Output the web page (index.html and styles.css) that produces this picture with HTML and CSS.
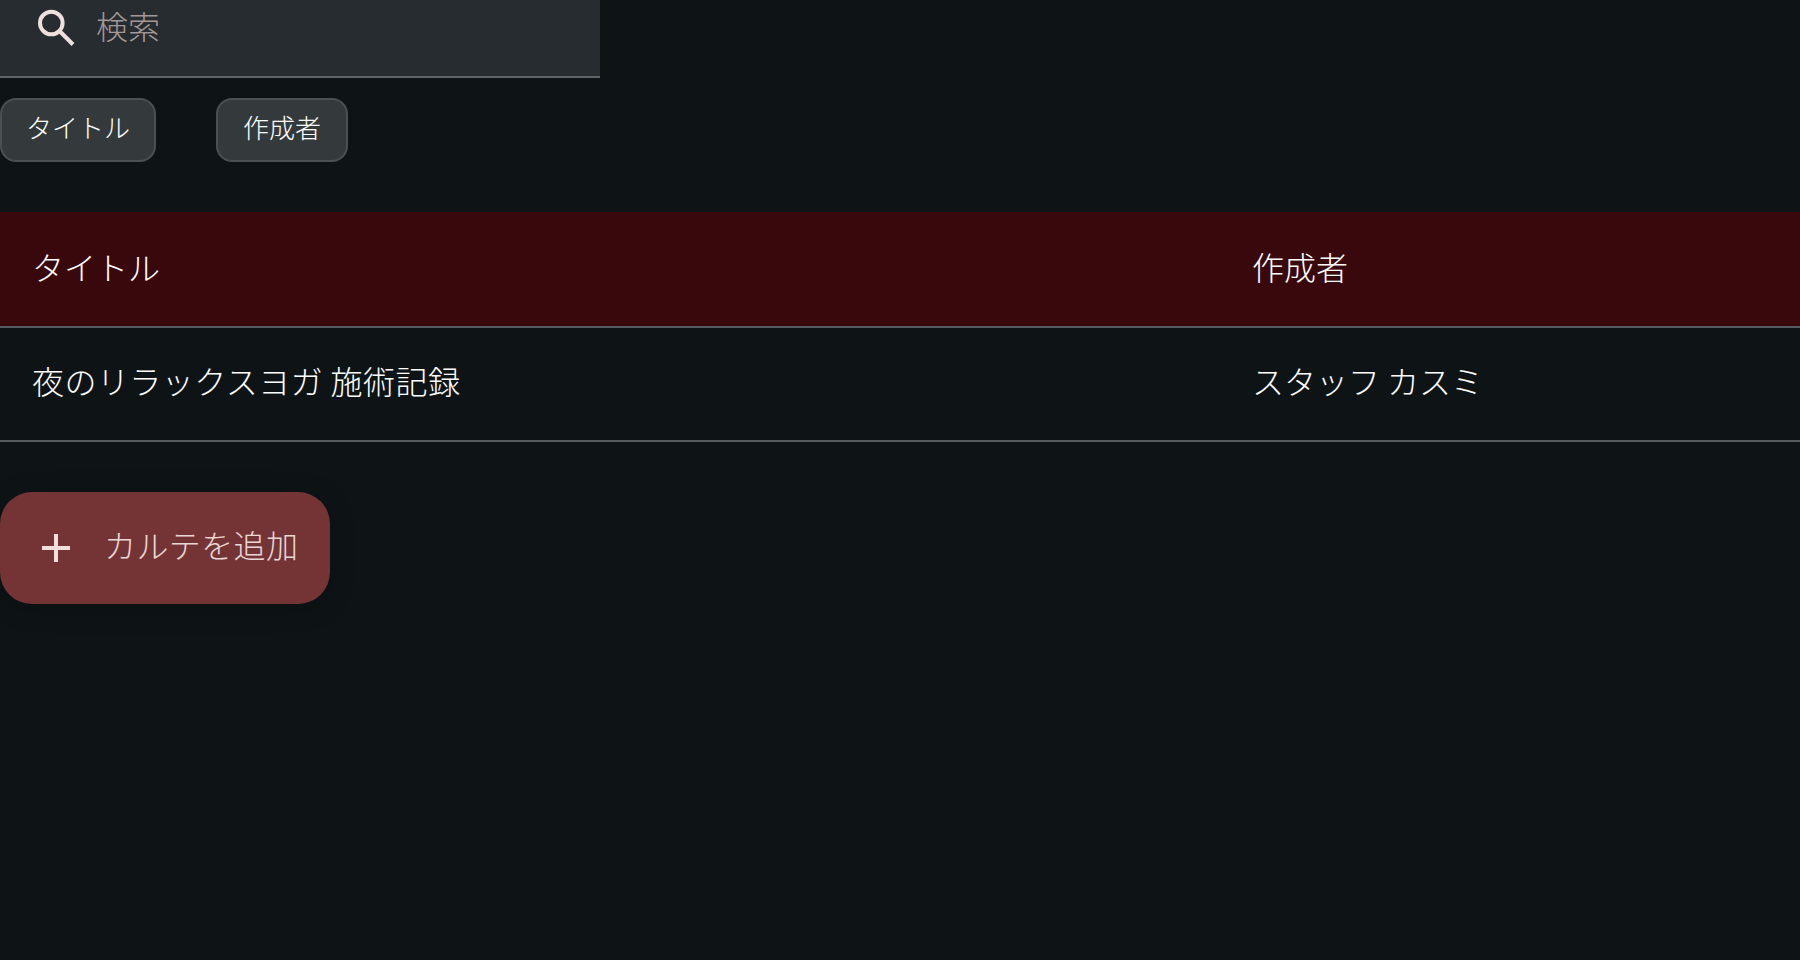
FILE: index.html
```html
<!DOCTYPE html>
<html lang="ja">
<head>
    <meta charset="UTF-8">
    <meta name="viewport" content="width=device-width, initial-scale=1.0">
    <title>カルテ</title>
    <link rel="stylesheet" href="styles.css">
</head>
<body>
<div class="page">
    <div class="search">
        <svg class="search-icon" viewBox="0 0 48 48"><circle cx="19.3" cy="19" r="11.3"/><path d="M28 27.5 41 40.5"/></svg>
        <span class="search-text">検索</span>
    </div>
    <div class="chips">
        <div class="chip">タイトル</div>
        <div class="chip">作成者</div>
    </div>
    <div class="table">
        <div class="row head">
            <div class="cell">タイトル</div>
            <div class="cell">作成者</div>
        </div>
        <div class="row body-row">
            <div class="cell title-cell">夜のリラックスヨガ 施術記録</div>
            <div class="cell">スタッフ カスミ</div>
        </div>
    </div>
    <div class="add-button">
        <svg class="add-icon" viewBox="0 0 24 24"><path d="M19 13h-6v6h-2v-6H5v-2h6V5h2v6h6v2z"/></svg>
        <span class="add-text">カルテを追加</span>
    </div>
</div>
</body>
</html>
```

FILE: styles.css
```css
html, body {
    margin: 0;
    height: 100%;
    overflow: hidden;
}
body {
    background: #0e1416;
    color: #fff;
    font-family: "Noto Sans CJK JP", "Noto Sans", sans-serif;
    font-weight: 300;
}
.search {
    width: 568px;
    height: 76px;
    display: flex;
    align-items: flex-start;
    gap: 16px;
    padding-left: 32px;
    background: #262c2f;
    border-bottom: 2px solid #5f6568;
}
.search-icon {
    width: 48px;
    height: 48px;
    margin-top: 4px;
    fill: none;
    stroke: #f0dfdd;
    stroke-width: 4;
}
.search-text {
    font-size: 32px;
    line-height: 51px;
    color: #a39997;
}
.chips {
    display: flex;
    gap: 60px;
    margin-top: 20px;
}
.chip {
    height: 64px;
    box-sizing: border-box;
    padding: 0 24px 8px;
    display: flex;
    align-items: center;
    font-size: 26px;
    background: #343a3c;
    border: 2px solid #4b5052;
    border-radius: 16px;
}
.chip + .chip {
    padding: 0 25px 8px;
}
.table {
    margin-top: 50px;
}
.row {
    display: grid;
    grid-template-columns: 1220px 1fr;
    box-sizing: border-box;
    border-bottom: 2px solid #5a5d5f;
}
.head {
    height: 116px;
    background: #39080c;
}
.body-row {
    height: 114px;
}
.cell {
    display: flex;
    align-items: center;
    padding: 0 0 7px 32px;
    font-size: 32px;
}
.body-row .cell {
    padding-bottom: 9px;
}
.title-cell {
    letter-spacing: 0.45px;
}
.add-button {
    display: inline-flex;
    align-items: center;
    gap: 24px;
    height: 112px;
    box-sizing: border-box;
    margin-top: 50px;
    padding: 0 32px;
    font-size: 32px;
    color: #e8d7d5;
    background: #743436;
    border-radius: 32px;
    box-shadow: 0 4px 24px rgba(0, 0, 0, 0.25);
}
.add-icon {
    width: 48px;
    height: 48px;
    fill: #f0dfdd;
}
.add-text {
    margin-bottom: 9px;
    letter-spacing: 0.4px;
}
```
